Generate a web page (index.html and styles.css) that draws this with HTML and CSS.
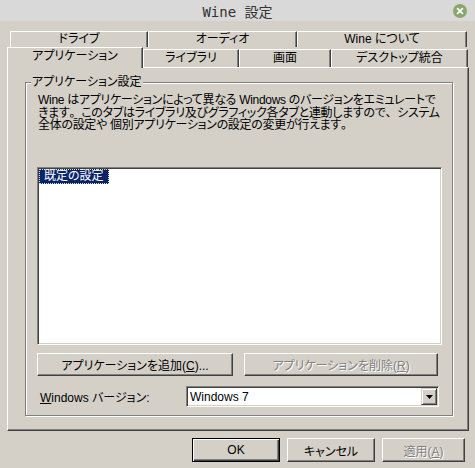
FILE: index.html
```html
<!DOCTYPE html>
<html lang="ja">
<head>
  <meta charset="UTF-8" />
  <title>Wine 設定</title>
  <link rel="stylesheet" href="styles.css">
</head>
<body>
  <div class="titlebar">
    <span></span>
    <span class="title">Wine 設定</span>
    <span class="close">
      <svg width="14" height="14" viewBox="0 0 14 14">
        <circle cx="7" cy="7" r="7" fill="#8aa76b" />
        <path d="M4.6 4.6 L9.4 9.4 M9.4 4.6 L4.6 9.4" stroke="#fff" stroke-width="1.8" stroke-linecap="round" />
      </svg>
    </span>
  </div>

  <div class="tabs">
    <div class="tab-row back">
      <div class="tab" style="width:138px">ドライブ</div>
      <div class="tab" style="width:149px">オーディオ</div>
      <div class="tab" style="width:170px">Wine について</div>
    </div>
    <div class="tab-row front">
      <div class="tab selected" style="width:136px">アプリケーション</div>
      <div class="tab" style="width:96px">ライブラリ</div>
      <div class="tab" style="width:92px">画面</div>
      <div class="tab" style="width:137px">デスクトップ統合</div>
    </div>
  </div>

  <div class="panel">
    <fieldset class="group">
      <legend>アプリケーション設定</legend>
      <p class="desc">Wine はアプリケーションによって異なる Windows のバージョンをエミュレートで<br>きます<span class="fw">。</span>このタブはライブラリ及びグラフィック各タブと連動しますので<span class="fw">、</span>システム<br>全体の設定や 個別アプリケーションの設定の変更が行えます<span class="fw">。</span></p>

      <div class="list">
        <span class="list-item selected">既定の設定</span>
      </div>

      <div class="btn-row">
        <button class="btn add">アプリケーションを追加(<u>C</u>)...</button>
        <button class="btn remove" disabled>アプリケーションを削除(<u>R</u>)</button>
      </div>

      <div class="version-row">
        <label class="version-label"><u>W</u>indows バージョン:</label>
        <div class="combo">
          <span class="combo-text">Windows 7</span>
          <span class="combo-arrow">
            <svg width="7" height="4" viewBox="0 0 7 4"><path d="M0 0 H7 L3.5 4 Z" fill="#000" /></svg>
          </span>
        </div>
      </div>
    </fieldset>
  </div>

  <div class="footer">
    <button class="btn default" style="width:88px">OK</button>
    <button class="btn" style="width:88px">キャンセル</button>
    <button class="btn" style="width:83px" disabled>適用(<u>A</u>)</button>
  </div>
</body>
</html>
```

FILE: styles.css
```css
body {
  margin: 0;
  width: 475px;
  height: 468px;
  overflow: hidden;
  background: #d4d0c8;
  color: #000;
  font-family: "Liberation Sans", "Noto Sans CJK JP", sans-serif;
  font-size: 12px;
  font-feature-settings: "palt";
}

/* window title */
.titlebar {
  height: 21px;
  background: #d9d9d9;
  display: grid;
  grid-template-columns: 1fr auto 1fr;
  align-items: center;
}

.title {
  font-family: "DejaVu Sans Mono", "Noto Sans CJK JP", monospace;
  font-size: 14px;
  color: #333;
  font-feature-settings: normal;
}

.close {
  justify-self: end;
  margin-right: 8px;
  height: 14px;
}

/* tab strip, two rows */
.tabs {
  padding-top: 10px;
}

.tab-row {
  display: flex;
}

.tab-row.back {
  margin-left: 10px;
  height: 16px;
}

.tab-row.front {
  margin-left: 7px;
  height: 20px;
  align-items: flex-end;
  position: relative;
  z-index: 1;
}

.tab {
  box-sizing: border-box;
  height: 100%;
  border-top: 1px solid #fff;
  border-left: 1px solid #fff;
  border-right: 1px solid #404040;
  box-shadow: inset -1px 0 #808080;
  background: #d4d0c8;
  text-align: center;
  line-height: 15px;
}

.tab-row.front .tab {
  height: 18px;
  line-height: 17px;
}

.tab-row.front .tab.selected {
  height: 21px;
  margin-bottom: -1px;
  line-height: 16px;
}

/* property page */
.panel {
  box-sizing: border-box;
  margin-left: 7px;
  width: 462px;
  height: 364px;
  border: 1px solid;
  border-color: #fff #404040 #404040 #fff;
  box-shadow: inset -1px -1px #808080;
  padding-top: 7px;
}

.group {
  box-sizing: border-box;
  margin: 0 0 0 17px;
  width: 428px;
  height: 341px;
  padding: 0 10px 0 11px;
  border: 1px solid #808080;
  box-shadow: inset 1px 1px #fff, 1px 1px #fff;
}

.group legend {
  margin-left: -6px;
  padding: 0 1px;
  line-height: 14px;
  background: #d4d0c8;
}

.desc {
  margin: 5px 0 0 1px;
  height: 73px;
  line-height: 12.5px;
  letter-spacing: -0.3px;
  white-space: nowrap;
}

/* full-width punctuation, not squeezed */
.fw {
  font-feature-settings: normal;
}

.list {
  box-sizing: border-box;
  height: 178px;
  border: 1px solid;
  border-color: #808080 #fff #fff #808080;
  box-shadow: inset 1px 1px #404040, inset -1px -1px #d4d0c8;
  background: #fff;
  padding: 1px;
}

.list-item {
  display: inline-block;
  padding: 0 4px;
  line-height: 13px;
}

.list-item.selected {
  background: #0a246a;
  color: #fff;
  border: 1px dotted #e8e4b0;
}

/* push buttons */
.btn {
  box-sizing: border-box;
  height: 23px;
  padding: 0;
  border: 1px solid;
  border-color: #fff #404040 #404040 #fff;
  box-shadow: inset -1px -1px #808080;
  background: #d4d0c8;
  color: #000;
  font: inherit;
}

.btn:disabled {
  color: #808080;
  text-shadow: 1px 1px #fff;
}

.btn.default {
  border: 1px solid #000;
  box-shadow: inset 1px 1px #fff, inset -1px -1px #404040, inset -2px -2px #808080;
}

.btn-row {
  display: flex;
  gap: 11px;
  margin-top: 8px;
}

.btn.add {
  width: 196px;
}

.btn.remove {
  width: 194px;
}

.version-row {
  display: flex;
  align-items: center;
  margin-top: 10px;
}

.version-label {
  width: 146px;
  padding-left: 3px;
}

.combo {
  box-sizing: border-box;
  width: 253px;
  height: 21px;
  display: flex;
  align-items: center;
  border: 1px solid;
  border-color: #808080 #fff #fff #808080;
  box-shadow: inset 1px 1px #404040, inset -1px -1px #d4d0c8;
  background: #fff;
  padding: 1px;
}

.combo-text {
  flex: 1;
  padding-left: 2px;
}

.combo-arrow {
  box-sizing: border-box;
  width: 16px;
  height: 17px;
  display: flex;
  align-items: center;
  justify-content: center;
  border: 1px solid;
  border-color: #d4d0c8 #404040 #404040 #d4d0c8;
  box-shadow: inset 1px 1px #fff, inset -1px -1px #808080;
  background: #d4d0c8;
}

/* dialog buttons */
.footer {
  display: flex;
  justify-content: flex-end;
  gap: 7px;
  margin-top: 7px;
  padding-right: 10px;
}

.footer .btn {
  height: 24px;
}
```
